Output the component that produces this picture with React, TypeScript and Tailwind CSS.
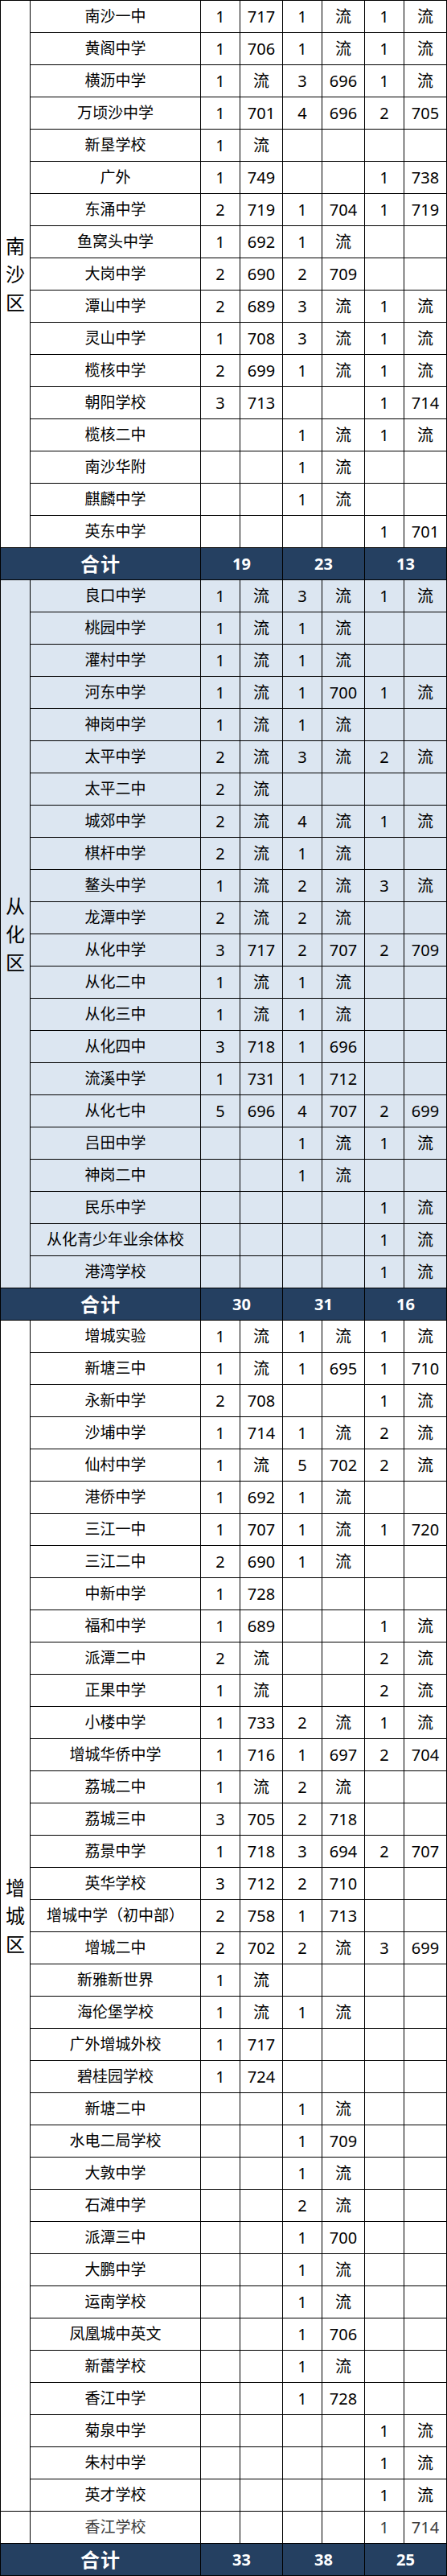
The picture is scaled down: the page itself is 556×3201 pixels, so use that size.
import React from "react";

type Row = [string, string, string, string, string, string, string];

const nansha: Row[] = [
  ["南沙一中", "1", "717", "1", "流", "1", "流"],
  ["黄阁中学", "1", "706", "1", "流", "1", "流"],
  ["横沥中学", "1", "流", "3", "696", "1", "流"],
  ["万顷沙中学", "1", "701", "4", "696", "2", "705"],
  ["新垦学校", "1", "流", "", "", "", ""],
  ["广外", "1", "749", "", "", "1", "738"],
  ["东涌中学", "2", "719", "1", "704", "1", "719"],
  ["鱼窝头中学", "1", "692", "1", "流", "", ""],
  ["大岗中学", "2", "690", "2", "709", "", ""],
  ["潭山中学", "2", "689", "3", "流", "1", "流"],
  ["灵山中学", "1", "708", "3", "流", "1", "流"],
  ["榄核中学", "2", "699", "1", "流", "1", "流"],
  ["朝阳学校", "3", "713", "", "", "1", "714"],
  ["榄核二中", "", "", "1", "流", "1", "流"],
  ["南沙华附", "", "", "1", "流", "", ""],
  ["麒麟中学", "", "", "1", "流", "", ""],
  ["英东中学", "", "", "", "", "1", "701"],
];

const conghua: Row[] = [
  ["良口中学", "1", "流", "3", "流", "1", "流"],
  ["桃园中学", "1", "流", "1", "流", "", ""],
  ["灌村中学", "1", "流", "1", "流", "", ""],
  ["河东中学", "1", "流", "1", "700", "1", "流"],
  ["神岗中学", "1", "流", "1", "流", "", ""],
  ["太平中学", "2", "流", "3", "流", "2", "流"],
  ["太平二中", "2", "流", "", "", "", ""],
  ["城郊中学", "2", "流", "4", "流", "1", "流"],
  ["棋杆中学", "2", "流", "1", "流", "", ""],
  ["鳌头中学", "1", "流", "2", "流", "3", "流"],
  ["龙潭中学", "2", "流", "2", "流", "", ""],
  ["从化中学", "3", "717", "2", "707", "2", "709"],
  ["从化二中", "1", "流", "1", "流", "", ""],
  ["从化三中", "1", "流", "1", "流", "", ""],
  ["从化四中", "3", "718", "1", "696", "", ""],
  ["流溪中学", "1", "731", "1", "712", "", ""],
  ["从化七中", "5", "696", "4", "707", "2", "699"],
  ["吕田中学", "", "", "1", "流", "1", "流"],
  ["神岗二中", "", "", "1", "流", "", ""],
  ["民乐中学", "", "", "", "", "1", "流"],
  ["从化青少年业余体校", "", "", "", "", "1", "流"],
  ["港湾学校", "", "", "", "", "1", "流"],
];

const zengcheng: Row[] = [
  ["增城实验", "1", "流", "1", "流", "1", "流"],
  ["新塘三中", "1", "流", "1", "695", "1", "710"],
  ["永新中学", "2", "708", "", "", "1", "流"],
  ["沙埔中学", "1", "714", "1", "流", "2", "流"],
  ["仙村中学", "1", "流", "5", "702", "2", "流"],
  ["港侨中学", "1", "692", "1", "流", "", ""],
  ["三江一中", "1", "707", "1", "流", "1", "720"],
  ["三江二中", "2", "690", "1", "流", "", ""],
  ["中新中学", "1", "728", "", "", "", ""],
  ["福和中学", "1", "689", "", "", "1", "流"],
  ["派潭二中", "2", "流", "", "", "2", "流"],
  ["正果中学", "1", "流", "", "", "2", "流"],
  ["小楼中学", "1", "733", "2", "流", "1", "流"],
  ["增城华侨中学", "1", "716", "1", "697", "2", "704"],
  ["荔城二中", "1", "流", "2", "流", "", ""],
  ["荔城三中", "3", "705", "2", "718", "", ""],
  ["荔景中学", "1", "718", "3", "694", "2", "707"],
  ["英华学校", "3", "712", "2", "710", "", ""],
  ["增城中学（初中部）", "2", "758", "1", "713", "", ""],
  ["增城二中", "2", "702", "2", "流", "3", "699"],
  ["新雅新世界", "1", "流", "", "", "", ""],
  ["海伦堡学校", "1", "流", "1", "流", "", ""],
  ["广外增城外校", "1", "717", "", "", "", ""],
  ["碧桂园学校", "1", "724", "", "", "", ""],
  ["新塘二中", "", "", "1", "流", "", ""],
  ["水电二局学校", "", "", "1", "709", "", ""],
  ["大敦中学", "", "", "1", "流", "", ""],
  ["石滩中学", "", "", "2", "流", "", ""],
  ["派潭三中", "", "", "1", "700", "", ""],
  ["大鹏中学", "", "", "1", "流", "", ""],
  ["运南学校", "", "", "1", "流", "", ""],
  ["凤凰城中英文", "", "", "1", "706", "", ""],
  ["新蕾学校", "", "", "1", "流", "", ""],
  ["香江中学", "", "", "1", "728", "", ""],
  ["菊泉中学", "", "", "", "", "1", "流"],
  ["朱村中学", "", "", "", "", "1", "流"],
  ["英才学校", "", "", "", "", "1", "流"],
];

const lastRow: Row = ["香江学校", "", "", "", "", "1", "714"];

const cell = "h-[40px] border-l border-t border-black flex items-center justify-center shrink-0";
const numW = ["w-[49px]", "w-[53px]", "w-[49px]", "w-[53px]", "w-[49px]", "w-[53px]"];

function DataRow({ row, muted }: { row: Row; muted?: boolean }) {
  const color = muted ? "text-[#3c3c3c]" : "text-black";
  return (
    <div className={`flex ${color}`}>
      <div className={`${cell} w-[212px] text-[19px] whitespace-nowrap`}>{row[0]}</div>
      {row.slice(1).map((v, i) => (
        <div key={i} className={`${cell} ${numW[i]} text-[20px]`}>
          {v}
        </div>
      ))}
    </div>
  );
}

function DistrictLabel({ name }: { name: string }) {
  return (
    <div className="flex flex-col items-center text-[24px] leading-[35px] text-black">
      {name.split("").map((c, i) => (
        <span key={i}>{c}</span>
      ))}
    </div>
  );
}

function Total({ a, b, c }: { a: string; b: string; c: string }) {
  return (
    <div className="flex bg-[#254061] text-white font-bold">
      <div className={`${cell} w-[249px] text-[24px] tracking-[1px]`}>合计</div>
      <div className={`${cell} w-[102px] text-[20px]`}>{a}</div>
      <div className={`${cell} w-[102px] text-[20px]`}>{b}</div>
      <div className={`${cell} w-[102px] text-[20px]`}>{c}</div>
    </div>
  );
}

function Section({
  name,
  rows,
  bg,
  extra,
}: {
  name: string;
  rows: Row[];
  bg: string;
  extra?: Row;
}) {
  return (
    <div className={bg}>
      <div className="flex">
        <div className="flex flex-col">
          <div
            className="w-[37px] border-l border-t border-black flex items-center justify-center"
            style={{ height: rows.length * 40 }}
          >
            <DistrictLabel name={name} />
          </div>
          {extra && <div className="w-[37px] h-[40px] border-l border-t border-black" />}
        </div>
        <div className="flex flex-col">
          {rows.map((r, i) => (
            <DataRow key={i} row={r} />
          ))}
          {extra && <DataRow row={extra} muted />}
        </div>
      </div>
    </div>
  );
}

export default function App() {
  return (
    <div className="w-[556px] bg-white font-['Noto_Sans','Noto_Sans_CJK_SC',sans-serif]">
      <div className="w-[556px] border-r border-b border-black">
        <Section name="南沙区" rows={nansha} bg="bg-white" />
        <Total a="19" b="23" c="13" />
        <Section name="从化区" rows={conghua} bg="bg-[#dce6f1]" />
        <Total a="30" b="31" c="16" />
        <Section name="增城区" rows={zengcheng} bg="bg-white" extra={lastRow} />
        <Total a="33" b="38" c="25" />
      </div>
    </div>
  );
}
